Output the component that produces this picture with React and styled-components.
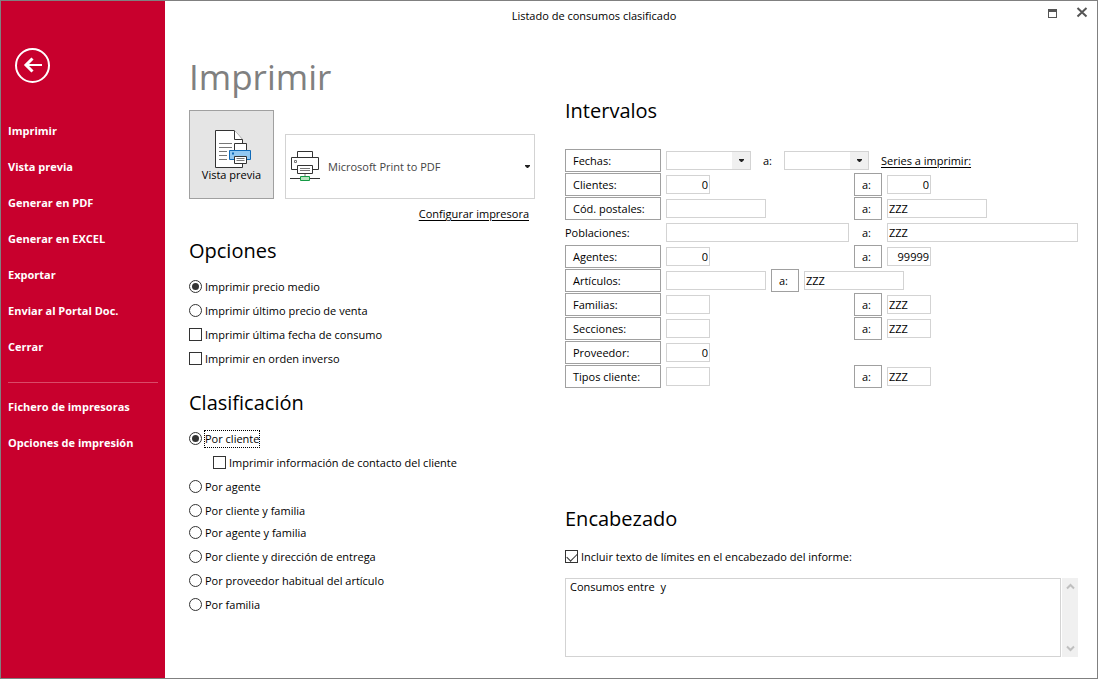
import React, { useState } from "react";
import styled, { createGlobalStyle } from "styled-components";

const GlobalStyle = createGlobalStyle`
  * {
    box-sizing: border-box;
  }

  body {
    margin: 0;
    font-family: "Open Sans", "Noto Sans", sans-serif;
    font-size: 11px;
    line-height: 16px;
    color: #000;
    background: #fff;
  }

  button, input, select, textarea {
    font: inherit;
    color: inherit;
    border-radius: 0;
  }
`;

const Window = styled.div`
  display: flex;
  min-height: 100vh;
  border: 1px solid #808080;
`;

const Sidebar = styled.aside`
  flex: 0 0 164px;
  padding: 47px 7px 0;
  color: #fff;
  background: #c8002d;
`;

const BackButton = styled.button`
  display: block;
  margin: 0 0 30px 7px;
  padding: 0;
  border: none;
  background: none;
  cursor: pointer;

  svg {
    display: block;
  }
`;

const Nav = styled.nav`
  display: flex;
  flex-direction: column;
`;

const NavButton = styled.button`
  padding: 0;
  border: none;
  background: none;
  font-weight: 700;
  line-height: 36px;
  text-align: left;
  cursor: pointer;
`;

const Divider = styled.hr`
  width: 100%;
  margin: 17px 0 6px;
  border: none;
  border-top: 1px solid #da4a68;
`;

const Main = styled.main`
  flex: 1;
  display: flex;
  flex-direction: column;
`;

const TitleBar = styled.header`
  display: flex;
  height: 30px;
`;

const WindowTitle = styled.div`
  flex: 1;
  line-height: 30px;
  text-align: center;
`;

const WindowControls = styled.div`
  display: flex;
  gap: 18px;
  width: 74px;
  padding: 6px 0 0 23px;
`;

const ControlButton = styled.button`
  display: block;
  width: 12px;
  height: 12px;
  padding: 0;
  border: none;
  background: none;

  svg {
    display: block;
  }
`;

const Content = styled.div`
  flex: 1;
  display: grid;
  grid-template-columns: 346px 1fr;
  gap: 30px;
  padding: 0 19px 21px 24px;
`;

const Column = styled.div`
  display: flex;
  flex-direction: column;
`;

const RightColumn = styled(Column)`
  padding-top: 66px;
`;

const PageTitle = styled.h1`
  margin: 22px 0 9px;
  font-size: 35px;
  font-weight: 400;
  line-height: 48px;
  color: #808080;
`;

const Heading = styled.h2`
  margin: 0 0 14px;
  font-size: 20px;
  font-weight: 400;
  line-height: 28px;
`;

const PrintRow = styled.div`
  display: flex;
  align-items: flex-end;
  gap: 11px;
`;

const PreviewButton = styled.button`
  display: flex;
  flex-direction: column;
  align-items: center;
  width: 85px;
  height: 89px;
  padding: 19px 0 0;
  border: 1px solid #a0a0a0;
  background: #e5e5e5;
  line-height: 14px;
`;

const PrinterBox = styled.label`
  flex: 1;
  display: flex;
  align-items: center;
  gap: 8px;
  height: 65px;
  padding: 0 4px;
  border: 1px solid #d3d3d3;
`;

const PrinterSelect = styled.select`
  flex: 1;
  height: 24px;
  padding: 0;
  border: none;
  outline: none;
  appearance: none;
  background: none;
  color: #444;
`;

const TextLink = styled.a`
  color: #000;
  text-decoration: underline;
  text-underline-offset: 2px;
`;

const ConfigRow = styled.div`
  margin: 7px 0 15px;
  padding-right: 6px;
  text-align: right;
`;

const Options = styled.div`
  display: flex;
  flex-direction: column;
  gap: 8px;
  margin-bottom: ${({ $space }) => $space || 0}px;
`;

const Option = styled.label`
  display: flex;
  align-items: flex-start;
  gap: 3px;
  height: 16px;
  padding-left: ${({ $nested }) => ($nested ? 24 : 0)}px;
`;

const OptionText = styled.span`
  outline: ${({ $focused }) => ($focused ? "1px dotted #000" : "none")};
`;

const Radio = styled.input.attrs({ type: "radio" })`
  display: grid;
  place-items: center;
  width: 13px;
  height: 13px;
  margin: 1px 0 0;
  border: 1px solid #333;
  border-radius: 50%;
  appearance: none;

  &:checked::after {
    content: "";
    width: 7px;
    height: 7px;
    border-radius: 50%;
    background: #333;
  }
`;

const Checkbox = styled.input.attrs({ type: "checkbox" })`
  display: grid;
  place-items: center;
  width: 13px;
  height: 13px;
  margin: 1px 0 0;
  border: 1px solid #333;
  appearance: none;

  &:checked::after {
    content: "";
    width: 9px;
    height: 5px;
    border: solid #333;
    border-width: 0 0 1px 1px;
    transform: translateY(-1px) rotate(-45deg);
  }
`;

const Ranges = styled.div`
  display: flex;
  flex-direction: column;
  gap: 1px;
  margin: 10px 0 24px;
`;

const RangeRow = styled.div`
  display: flex;
  align-items: center;
  gap: 5px;
  height: 23px;
`;

const FromCell = styled.div`
  display: flex;
  width: ${({ $inline }) => ($inline ? "auto" : "183px")};
`;

const RangeButton = styled.button`
  width: 96px;
  height: 23px;
  padding: 0 7px;
  border: 1px solid #a0a0a0;
  background: #fff;
  text-align: left;
`;

const RangeLabel = styled.label`
  width: 96px;
`;

const ToButton = styled(RangeButton)`
  width: 28px;
`;

const ToLabel = styled.label`
  width: ${({ $narrow }) => ($narrow ? 23 : 28)}px;
  padding-left: ${({ $narrow }) => ($narrow ? 7 : 8)}px;
`;

const fieldWidths = {
  small: "44px",
  medium: "100px",
  full: "100%",
};

const Field = styled.input`
  width: ${({ $size }) => fieldWidths[$size]};
  height: 19px;
  padding: 0 1px;
  border: 1px solid #d3d3d3;
  outline: none;
  background: #fff;
  line-height: 16px;
  text-align: ${({ $numeric }) => ($numeric ? "right" : "left")};
`;

const ToCell = styled.div`
  display: flex;
  flex: ${({ $inline }) => ($inline ? "none" : 1)};
`;

const Combo = styled.div`
  display: flex;
  width: 85px;
  height: 19px;
  border: 1px solid #d3d3d3;
`;

const ComboSelect = styled.select`
  flex: 1;
  min-width: 0;
  padding: 0;
  border: none;
  outline: none;
  appearance: none;
  background: #fff;
`;

const ComboArrow = styled.span`
  display: flex;
  align-items: center;
  justify-content: center;
  width: 18px;
  background: #f0f0f0;
`;

const SeriesLink = styled(TextLink)`
  margin-left: 7px;
`;

const HeaderSection = styled.section`
  margin-top: auto;
`;

const HeaderHeading = styled(Heading)`
  margin-bottom: 16px;
`;

const TextBox = styled.div`
  display: flex;
  gap: 1px;
  height: 79px;
  margin-top: 13px;
`;

const TextArea = styled.textarea`
  flex: 1;
  padding: 0 4px;
  border: 1px solid #d3d3d3;
  outline: none;
  resize: none;
  overflow: hidden;
`;

const ScrollBar = styled.div`
  display: flex;
  flex-direction: column;
  justify-content: space-between;
  width: 16px;
  background: #f0f0f0;
`;

const ScrollButton = styled.button`
  display: flex;
  align-items: center;
  justify-content: center;
  height: 17px;
  padding: 0;
  border: none;
  background: none;
`;

const BackIcon = () => (
  <svg width="35" height="35" viewBox="0 0 35 35" fill="none" stroke="#fff">
    <circle cx="17.5" cy="17.5" r="16.5" strokeWidth="2" />
    <path d="M10 17H27" strokeWidth="2" />
    <path d="M17.5 10.5L11 17L17.5 23.5" strokeWidth="3" />
  </svg>
);

const PreviewIcon = () => (
  <svg width="41" height="38" viewBox="-4 0 41 38" fill="#fff" stroke="#333">
    <path d="M.5 .5H19L27.5 9.5V37.5H.5Z" />
    <path d="M19.5 .5V9.5H27.5" />
    <path d="M4 13.5H17M4 17.5H17M4 21.5H12M4 25.5H12M4 29.5H12" stroke="#777" />
    <path d="M19.5 20.5V13.5H31.5V20.5" />
    <path d="M14.5 20.5H35.5V29.5H14.5Z" fill="#92c8f1" stroke="#0f6ab8" />
    <path d="M17 22.5H19V24.5H17Z" fill="#0f6ab8" stroke="none" />
    <path d="M19.5 26.5H31.5V33.5H19.5Z" />
    <path d="M21.5 28.5H29.5M21.5 30.5H29.5" stroke="#777" />
  </svg>
);

const PrinterIcon = () => (
  <svg width="30" height="33" viewBox="0 0 30 33" fill="#fff" stroke="#333">
    <path d="M7.5 7.5V1.5H22.5V7.5" />
    <path d="M1.5 7.5H28.5V19.5H1.5Z" />
    <path d="M4.5 10.5H6.5V12.5H4.5Z" stroke="#777" />
    <path d="M7.5 15.5H22.5V23.5H7.5Z" />
    <path d="M10 18.5H20M10 20.5H20" stroke="#777" />
    <path d="M15 24V27" stroke="#777" />
    <path d="M0 28.5H30" />
    <path d="M10.5 26.5H19.5V30.5H10.5Z" fill="#b5e3bd" stroke="#159a45" />
  </svg>
);

const ArrowIcon = () => (
  <svg width="5" height="3" viewBox="0 0 5 3">
    <path d="M0 0H5V1L3 3H2L0 1Z" fill="#222" />
  </svg>
);

const MaximizeIcon = () => (
  <svg width="12" height="12" viewBox="0 0 12 12">
    <path d="M2 2H11V11H2ZM3 5V10H10V5Z" fill="#555" fillRule="evenodd" />
  </svg>
);

const CloseIcon = () => (
  <svg width="12" height="12" viewBox="0 0 12 12">
    <path d="M1.5 1L10.5 9.5M10.5 1L1.5 9.5" stroke="#555" strokeWidth="2" />
  </svg>
);

const ChevronIcon = ({ down }) => (
  <svg width="9" height="7" viewBox="0 0 9 7" fill="none">
    <path
      d={down ? "M1 1.5L4.5 5L8 1.5" : "M1 5.5L4.5 2L8 5.5"}
      stroke="#bfbfbf"
      strokeWidth="2"
    />
  </svg>
);

const actions = [
  "Imprimir",
  "Vista previa",
  "Generar en PDF",
  "Generar en EXCEL",
  "Exportar",
  "Enviar al Portal Doc.",
  "Cerrar",
];

const settings = ["Fichero de impresoras", "Opciones de impresión"];

const ranges = [
  { label: "Clientes:", from: "0", to: "0", size: "small", numeric: true },
  { label: "Cód. postales:", from: "", to: "ZZZ", size: "medium" },
  { label: "Poblaciones:", from: "", to: "ZZZ", size: "full", plain: true },
  { label: "Agentes:", from: "0", to: "99999", size: "small", numeric: true },
  { label: "Artículos:", from: "", to: "ZZZ", size: "medium", inline: true },
  { label: "Familias:", from: "", to: "ZZZ", size: "small" },
  { label: "Secciones:", from: "", to: "ZZZ", size: "small" },
  { label: "Proveedor:", from: "0", size: "small", numeric: true },
  { label: "Tipos cliente:", from: "", to: "ZZZ", size: "small" },
];

function DateCombo({ id, label }) {
  return (
    <Combo>
      <ComboSelect id={id} aria-label={label}>
        <option></option>
      </ComboSelect>
      <ComboArrow>
        <ArrowIcon />
      </ComboArrow>
    </Combo>
  );
}

function Range({ label, from, to, size, numeric, plain, inline }) {
  const id = label.replace(/[^a-zA-Z]/g, "");

  return (
    <RangeRow>
      {plain ? (
        <RangeLabel htmlFor={`${id}From`}>{label}</RangeLabel>
      ) : (
        <RangeButton>{label}</RangeButton>
      )}
      <FromCell $inline={inline}>
        <Field
          id={`${id}From`}
          aria-label={label}
          $size={size}
          $numeric={numeric}
          defaultValue={from}
        />
      </FromCell>
      {to !== undefined && (
        <>
          {plain ? (
            <ToLabel htmlFor={`${id}To`}>a:</ToLabel>
          ) : (
            <ToButton>a:</ToButton>
          )}
          <ToCell $inline={inline}>
            <Field
              id={`${id}To`}
              aria-label={`${label} a:`}
              $size={size}
              $numeric={numeric}
              defaultValue={to}
            />
          </ToCell>
        </>
      )}
    </RangeRow>
  );
}

function App() {
  const [price, setPrice] = useState("Imprimir precio medio");
  const [order, setOrder] = useState("Por cliente");

  const renderPrice = (text) => (
    <Option key={text}>
      <Radio name="price" checked={price === text} onChange={() => setPrice(text)} />
      <OptionText>{text}</OptionText>
    </Option>
  );

  const renderOrder = (text) => (
    <Option key={text}>
      <Radio name="order" checked={order === text} onChange={() => setOrder(text)} />
      <OptionText $focused={order === text}>{text}</OptionText>
    </Option>
  );

  return (
    <>
      <GlobalStyle />
      <Window>
        <Sidebar>
          <BackButton aria-label="Volver">
            <BackIcon />
          </BackButton>
          <Nav>
            {actions.map((action) => (
              <NavButton key={action}>{action}</NavButton>
            ))}
            <Divider />
            {settings.map((setting) => (
              <NavButton key={setting}>{setting}</NavButton>
            ))}
          </Nav>
        </Sidebar>

        <Main>
          <TitleBar>
            <WindowTitle>Listado de consumos clasificado</WindowTitle>
            <WindowControls>
              <ControlButton aria-label="Maximizar">
                <MaximizeIcon />
              </ControlButton>
              <ControlButton aria-label="Cerrar ventana">
                <CloseIcon />
              </ControlButton>
            </WindowControls>
          </TitleBar>

          <Content>
            <Column>
              <PageTitle>Imprimir</PageTitle>
              <PrintRow>
                <PreviewButton>
                  <PreviewIcon />
                  Vista previa
                </PreviewButton>
                <PrinterBox>
                  <PrinterIcon />
                  <PrinterSelect aria-label="Impresora">
                    <option>Microsoft Print to PDF</option>
                  </PrinterSelect>
                  <ArrowIcon />
                </PrinterBox>
              </PrintRow>
              <ConfigRow>
                <TextLink href="#configurar">Configurar impresora</TextLink>
              </ConfigRow>

              <Heading>Opciones</Heading>
              <Options $space={22}>
                {["Imprimir precio medio", "Imprimir último precio de venta"].map(renderPrice)}
                <Option>
                  <Checkbox />
                  <OptionText>Imprimir última fecha de consumo</OptionText>
                </Option>
                <Option>
                  <Checkbox />
                  <OptionText>Imprimir en orden inverso</OptionText>
                </Option>
              </Options>

              <Heading>Clasificación</Heading>
              <Options $space={6}>
                {renderOrder("Por cliente")}
                <Option $nested>
                  <Checkbox />
                  <OptionText>Imprimir información de contacto del cliente</OptionText>
                </Option>
                {["Por agente", "Por cliente y familia"].map(renderOrder)}
              </Options>
              <Options>
                {[
                  "Por agente y familia",
                  "Por cliente y dirección de entrega",
                  "Por proveedor habitual del artículo",
                  "Por familia",
                ].map(renderOrder)}
              </Options>
            </Column>

            <RightColumn>
              <Heading>Intervalos</Heading>
              <Ranges>
                <RangeRow>
                  <RangeButton>Fechas:</RangeButton>
                  <DateCombo id="dateFrom" label="Fechas:" />
                  <ToLabel $narrow htmlFor="dateTo">
                    a:
                  </ToLabel>
                  <DateCombo id="dateTo" />
                  <SeriesLink href="#series">Series a imprimir:</SeriesLink>
                </RangeRow>
                {ranges.map((range) => (
                  <Range key={range.label} {...range} />
                ))}
              </Ranges>

              <HeaderSection>
                <HeaderHeading>Encabezado</HeaderHeading>
                <Option>
                  <Checkbox defaultChecked />
                  <OptionText>Incluir texto de límites en el encabezado del informe:</OptionText>
                </Option>
                <TextBox>
                  <TextArea aria-label="Encabezado" defaultValue="Consumos entre  y" />
                  <ScrollBar>
                    <ScrollButton aria-label="Subir">
                      <ChevronIcon />
                    </ScrollButton>
                    <ScrollButton aria-label="Bajar">
                      <ChevronIcon down />
                    </ScrollButton>
                  </ScrollBar>
                </TextBox>
              </HeaderSection>
            </RightColumn>
          </Content>
        </Main>
      </Window>
    </>
  );
}

export default App;
